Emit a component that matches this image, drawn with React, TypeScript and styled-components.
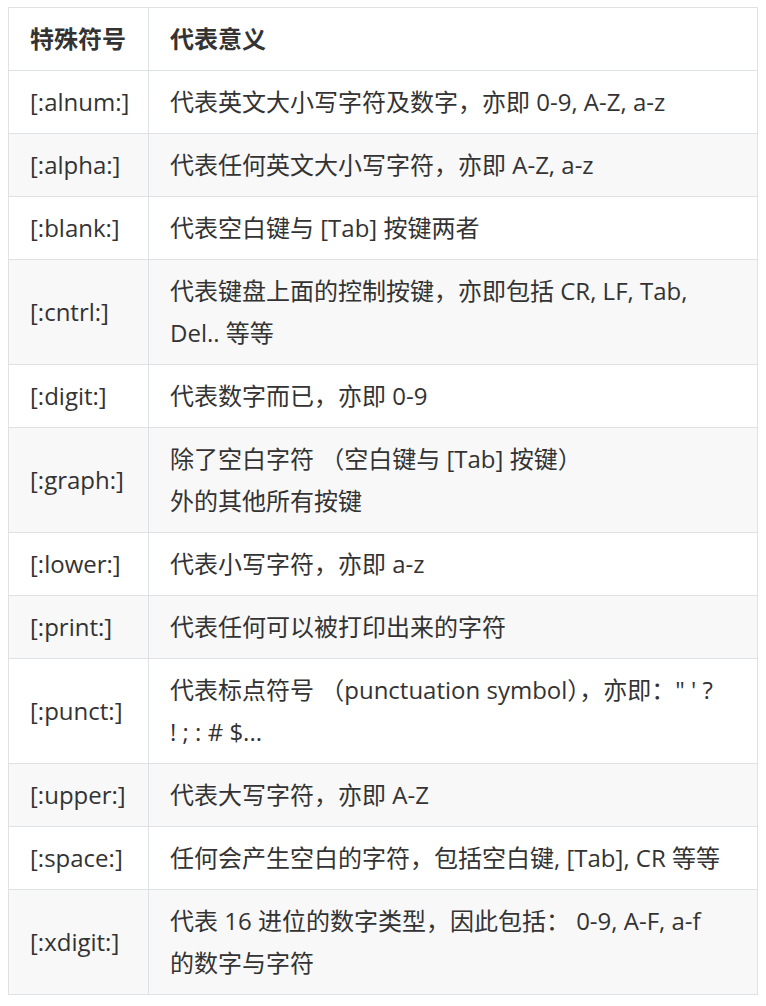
import styled, { createGlobalStyle } from "styled-components";

type Row = { symbol: string; meaning: string[] };

const rows: Row[] = [
  { symbol: "[:alnum:]", meaning: ["代表英文大小写字符及数字，亦即 0-9, A-Z, a-z"] },
  { symbol: "[:alpha:]", meaning: ["代表任何英文大小写字符，亦即 A-Z, a-z"] },
  { symbol: "[:blank:]", meaning: ["代表空白键与 [Tab] 按键两者"] },
  {
    symbol: "[:cntrl:]",
    meaning: ["代表键盘上面的控制按键，亦即包括 CR, LF, Tab,", "Del.. 等等"],
  },
  { symbol: "[:digit:]", meaning: ["代表数字而已，亦即 0-9"] },
  {
    symbol: "[:graph:]",
    meaning: ["除了空白字符 （空白键与 [Tab] 按键）", "外的其他所有按键"],
  },
  { symbol: "[:lower:]", meaning: ["代表小写字符，亦即 a-z"] },
  { symbol: "[:print:]", meaning: ["代表任何可以被打印出来的字符"] },
  {
    symbol: "[:punct:]",
    meaning: ["代表标点符号 （punctuation symbol），亦即：\" ' ?", "! ; : # $..."],
  },
  { symbol: "[:upper:]", meaning: ["代表大写字符，亦即 A-Z"] },
  { symbol: "[:space:]", meaning: ["任何会产生空白的字符，包括空白键, [Tab], CR 等等"] },
  {
    symbol: "[:xdigit:]",
    meaning: ["代表 16 进位的数字类型，因此包括： 0-9, A-F, a-f", "的数字与字符"],
  },
];

export default function App() {
  return (
    <>
      <GlobalStyle />
      <Page>
        <Table>
          <thead>
            <HeadRow>
              <HeadCell $width={140}>特殊符号</HeadCell>
              <HeadCell>代表意义</HeadCell>
            </HeadRow>
          </thead>
          <tbody>
            {rows.map((row) => (
              <BodyRow key={row.symbol}>
                <Cell>{row.symbol}</Cell>
                <Cell>
                  {row.meaning.map((line, i) => (
                    <Line key={i}>{line}</Line>
                  ))}
                </Cell>
              </BodyRow>
            ))}
          </tbody>
        </Table>
      </Page>
    </>
  );
}

const GlobalStyle = createGlobalStyle`
  body {
    margin: 0;
    background: #fff;
    font-family: "Open Sans", "Noto Sans CJK SC", sans-serif;
    color: #333;
  }
`;

const Page = styled.div`
  padding: 7px 8px;
`;

const Table = styled.table`
  width: 750px;
  border-collapse: collapse;
  table-layout: fixed;
  font-size: 24px;
  line-height: 42px;
`;

const HeadRow = styled.tr`
  background: #fff;
`;

const BodyRow = styled.tr`
  background: #fff;
  border-top: 1px solid #dfe2e5;

  &:nth-child(2n) {
    background: #f8f8f8;
  }
`;

const HeadCell = styled.th<{ $width?: number }>`
  box-sizing: border-box;
  width: ${(p) => (p.$width ? `${p.$width}px` : "auto")};
  padding: 10px 21px;
  border: 1px solid #dfe2e5;
  text-align: left;
  font-weight: 700;
  color: #333;
`;

const Cell = styled.td`
  padding: 10px 21px;
  border: 1px solid #dfe2e5;
  vertical-align: middle;
`;

const Line = styled.div`
  white-space: nowrap;
`;
